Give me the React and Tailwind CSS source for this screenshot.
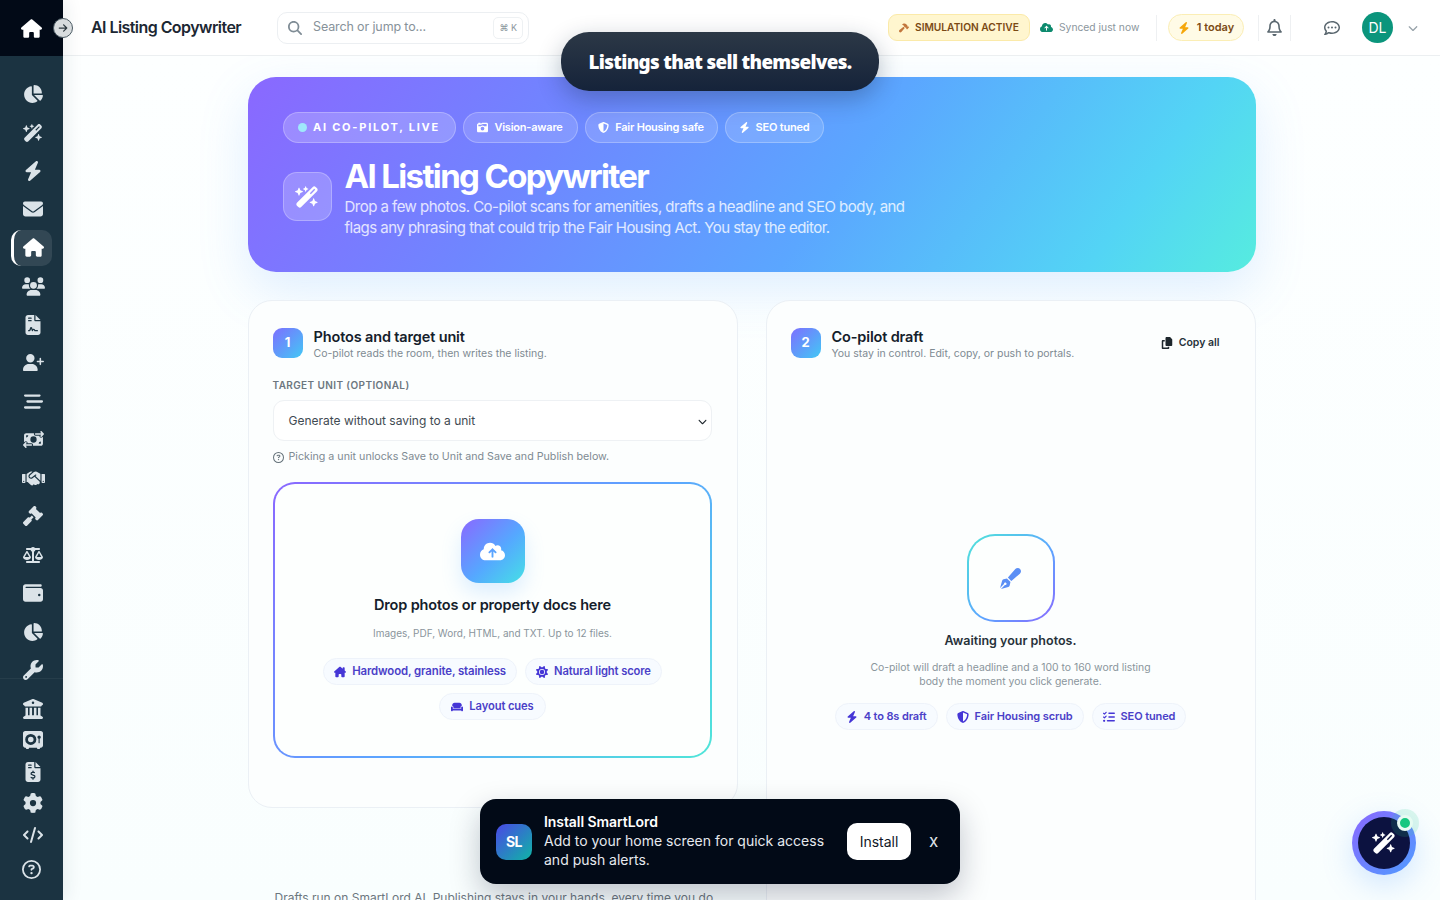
import React from 'react';
import {
  FaChartPie, FaWandMagicSparkles, FaBolt, FaEnvelope, FaHouse, FaUsers, FaFileContract, FaUserPlus,
  FaBarsStaggered, FaMoneyBillTransfer, FaHandshake, FaGavel, FaScaleBalanced, FaWallet, FaWrench,
  FaBuildingColumns, FaVault, FaFileInvoiceDollar, FaGear, FaCode, FaRegCircleQuestion, FaArrowRight,
  FaMagnifyingGlass, FaHammer, FaCloudArrowUp, FaRegBell, FaRegCommentDots, FaChevronDown, FaCameraRetro,
  FaShieldHalved, FaHouseChimney, FaSun, FaCouch, FaPenFancy, FaListCheck, FaCopy,
} from 'react-icons/fa6';

// icon + pixel size, the wide ones run a bit bigger in the reference
const mainNav = [
  [FaChartPie, 20], [FaWandMagicSparkles, 20], [FaBolt, 20], [FaEnvelope, 20], [FaHouse, 20], [FaUsers, 23],
  [FaFileContract, 20], [FaUserPlus, 21], [FaBarsStaggered, 19], [FaMoneyBillTransfer, 21], [FaHandshake, 23],
  [FaGavel, 20], [FaScaleBalanced, 20], [FaWallet, 20], [FaChartPie, 20], [FaWrench, 20],
];
const lowerNav = [FaBuildingColumns, FaVault, FaFileInvoiceDollar, FaGear, FaCode];

const Sidebar = () => (
  <aside className="w-[63px] shrink-0 h-full bg-[#1b3341] flex flex-col relative z-10 shadow-[4px_0_16px_rgba(30,50,60,0.08)]">
    <div className="h-[56px] bg-[#020a17] flex items-center pl-[21px] shrink-0">
      <FaHouse className="text-white text-[21px]" />
    </div>
    <nav className="flex flex-col pt-[19px]">
      {mainNav.map(([Icon, size], i) => {
        const active = i === 4;
        return (
          <div key={i} className="h-[38.4px] flex items-center justify-center pl-[3px]">
            {active ? (
              <div className="w-[41px] h-[36px] -ml-[3px] rounded-[10px] bg-white/10 border-l-[3px] border-white flex items-center justify-center">
                <Icon className="text-white" size={size + 1} />
              </div>
            ) : (
              <Icon className="text-[#dbe3e8]" size={size} />
            )}
          </div>
        );
      })}
    </nav>
    <div className="flex flex-col -mt-[11px] pt-[14px] border-t border-white/5">
      {lowerNav.map((Icon, i) => (
        <div key={i} className="h-[31.4px] flex items-center justify-center pl-[3px]">
          <Icon className="text-[#dbe3e8] text-[20px]" />
        </div>
      ))}
      <div className="h-[31.4px] mt-[4px] flex items-center justify-center">
        <FaRegCircleQuestion className="text-[#dbe3e8] text-[19px]" />
      </div>
    </div>
  </aside>
);

const Topbar = () => (
  <header className="h-[56px] shrink-0 bg-white border-b border-[#eceff1] flex items-center pl-[28px] pr-[22px] relative">
    <span className="absolute -left-[10px] top-[18px] w-[20px] h-[20px] rounded-full bg-[#d8dcde] border border-[#4b5a63] flex items-center justify-center z-20">
      <FaArrowRight className="text-[#2f3a41] text-[10px]" />
    </span>
    <div className="w-[186px] -mt-[1px] text-[16px] font-semibold text-[#1c2733] tracking-[-0.035em] whitespace-nowrap">AI Listing Copywriter</div>
    <div className="w-[252px] h-[32px] rounded-[10px] border border-[#eceff2] flex items-center pl-[10px] pr-[5px]">
      <FaMagnifyingGlass className="text-[#7f8c95] text-[14px]" />
      <span className="ml-[11px] text-[12.5px] text-[#87929a] tracking-[-0.01em]">Search or jump to...</span>
      <span className="ml-auto h-[22px] px-[5px] rounded-[5px] border border-[#eef1f3] flex items-center text-[9px] text-[#8b969d]">⌘ K</span>
    </div>
    <div className="ml-auto flex items-center">
      <div className="h-[27px] w-[142px] rounded-[9px] bg-[#fff6cf] border border-[#fbeaa9] flex items-center justify-center gap-[6px] text-[10.2px] font-semibold text-[#7b4a14]">
        <FaHammer className="text-[#c2763c] text-[10px]" />
        SIMULATION ACTIVE
      </div>
      <div className="ml-[10px] w-[116px] flex items-center gap-[6px] text-[10.3px] text-[#8b969d] whitespace-nowrap">
        <FaCloudArrowUp className="text-[#0d8a6e] text-[13px]" />
        Synced just now
      </div>
      <span className="w-px h-[26px] bg-[#eef0f2]"></span>
      <div className="ml-[11px] h-[27px] w-[76px] rounded-full bg-[#fffbe6] border border-[#fbeeb5] flex items-center justify-center gap-[7px] text-[11px] font-semibold text-[#7b4a14]">
        <FaBolt className="text-[#f5a70c] text-[12px]" />
        1 today
      </div>
      <span className="ml-[14px] w-px h-[26px] bg-[#eef0f2]"></span>
      <div className="w-[31px] flex justify-center"><FaRegBell className="text-[#5a676f] text-[17px]" /></div>
      <span className="w-px h-[26px] bg-[#eef0f2]"></span>
      <div className="ml-[32px] w-[17px] flex justify-center"><FaRegCommentDots className="text-[#5a676f] text-[16px]" /></div>
      <div className="ml-[22px] w-[31px] h-[31px] rounded-full bg-[#0b957c] flex items-center justify-center text-[14px] text-white">DL</div>
      <FaChevronDown className="ml-[15px] text-[#98a3aa] text-[10px]" />
    </div>
  </header>
);

const HeroChip = ({ icon: Icon, children, width }) => (
  <span className={`h-[31px] ${width} rounded-full bg-white/15 border border-white/25 flex items-center justify-center gap-[6px] text-[11px] font-semibold text-white tracking-[-0.02em] whitespace-nowrap`}>
    <Icon className="text-[11px]" />
    {children}
  </span>
);

const Hero = () => (
  <section className="w-[1008px] h-[195px] mx-auto rounded-[28px] px-[35px] pt-[35px] bg-[linear-gradient(125deg,#8a68ff_0%,#6f86ff_30%,#5ba6ff_58%,#53d4f5_85%,#56ecdf_100%)] shadow-[0_18px_50px_rgba(90,160,255,0.18)]">
    <div className="flex gap-[7px]">
      <span className="h-[31px] w-[173px] rounded-full bg-white/20 border border-white/25 flex items-center justify-center gap-[6px] text-[11px] font-bold text-white tracking-[0.16em]">
        <span className="w-[9px] h-[9px] rounded-full bg-[#9fe8fb]"></span>
        AI CO-PILOT, LIVE
      </span>
      <HeroChip icon={FaCameraRetro} width="w-[115px]">Vision-aware</HeroChip>
      <HeroChip icon={FaShieldHalved} width="w-[133px]">Fair Housing safe</HeroChip>
      <HeroChip icon={FaBolt} width="w-[99px]">SEO tuned</HeroChip>
    </div>
    <div className="flex items-center mt-[12.5px] gap-[13px]">
      <div className="w-[49px] h-[49px] rounded-[14px] bg-white/20 border border-white/25 flex items-center justify-center">
        <FaWandMagicSparkles className="text-white text-[24px]" />
      </div>
      <div>
        <h1 className="text-[33px] leading-[40px] font-bold text-white tracking-[-0.05em] whitespace-nowrap">AI Listing Copywriter</h1>
        <p className="text-[15px] leading-[21px] text-white/80 tracking-[-0.035em] w-[570px]">
          Drop a few photos. Co-pilot scans for amenities, drafts a headline and SEO body, and flags any phrasing that could trip the Fair Housing Act. You stay the editor.
        </p>
      </div>
    </div>
  </section>
);

const CardHeader = ({ n, title, sub, children }) => (
  <div className="flex items-start gap-[11px]">
    <div className="w-[30px] h-[30px] rounded-[9px] bg-[linear-gradient(135deg,#7d6fff,#42c8f5)] flex items-center justify-center text-white text-[13px] font-bold">{n}</div>
    <div>
      <div className="text-[14.5px] leading-[18px] font-semibold text-[#14202b] tracking-[-0.01em] whitespace-nowrap">{title}</div>
      <div className="text-[10.5px] leading-[16px] text-[#7e8a92] whitespace-nowrap">{sub}</div>
    </div>
    {children}
  </div>
);

const Chip = ({ icon: Icon, children, className }) => (
  <span className={`h-[27px] rounded-full bg-[#f7fbff] border border-[#eef3fa] flex items-center gap-[6px] font-semibold text-[#4a40c8] tracking-[-0.01em] whitespace-nowrap ${className}`}>
    <Icon className="text-[12px] text-[#4536d6]" />
    {children}
  </span>
);

const LeftCard = () => (
  <div className="h-[508px] rounded-[24px] border border-[#ebf0f5] bg-[#fcfefe] pl-[24px] pr-[25px] pt-[27px]">
    <CardHeader n="1" title="Photos and target unit" sub="Co-pilot reads the room, then writes the listing." />
    <div className="mt-[16px] text-[10px] leading-[14px] font-semibold text-[#6c777f] tracking-[0.04em]">TARGET UNIT (OPTIONAL)</div>
    <div className="mt-[8px] h-[41px] rounded-[11px] border border-[#eef1f4] bg-white flex items-center pt-[1px] pl-[15px] pr-[3px] text-[12px] text-[#3f4a52]">
      Generate without saving to a unit
      <FaChevronDown className="ml-auto text-[#1d252b] text-[9px] mr-[1px]" />
    </div>
    <div className="mt-[9px] flex items-center gap-[5px] text-[10.7px] leading-[14px] text-[#7e8a92]">
      <FaRegCircleQuestion className="text-[#65727a] text-[11px]" />
      Picking a unit unlocks Save to Unit and Save and Publish below.
    </div>
    <div className="mt-[18px] h-[276px] pl-[1px] rounded-[22px] border-2 border-transparent [background:linear-gradient(#fdfffe,#fdfffe)_padding-box,linear-gradient(135deg,#8a68ff,#5ba6ff_55%,#4fe6d8)_border-box] flex flex-col items-center pt-[35px]">
      <div className="w-[64px] h-[64px] rounded-[18px] bg-[linear-gradient(135deg,#8a68ff,#55a8ff_55%,#45e0e6)] shadow-[0_10px_20px_rgba(90,170,255,0.2)] flex items-center justify-center">
        <FaCloudArrowUp className="text-white text-[25px]" />
      </div>
      <div className="mt-[13px] text-[14.5px] leading-[18px] font-semibold text-[#14202b] tracking-[-0.01em]">Drop photos or property docs here</div>
      <div className="mt-[12px] text-[10px] leading-[14px] text-[#8a959c]">Images, PDF, Word, HTML, and TXT. Up to 12 files.</div>
      <div className="mt-[18px] flex flex-wrap justify-center gap-x-[8px] gap-y-[8px] w-[400px]">
        <Chip icon={FaHouseChimney} className="px-[10px] text-[11.4px]">Hardwood, granite, stainless</Chip>
        <Chip icon={FaSun} className="px-[10px] text-[11.2px]">Natural light score</Chip>
        <Chip icon={FaCouch} className="px-[11px] text-[11.2px]">Layout cues</Chip>
      </div>
    </div>
  </div>
);

const RightCard = () => (
  <div className="h-[700px] rounded-[24px] border border-[#ebf0f5] bg-[#fcfefe] px-[24px] pt-[27px]">
    <CardHeader n="2" title="Co-pilot draft" sub="You stay in control. Edit, copy, or push to portals.">
      <div className="ml-auto mr-[11px] mt-[7px] flex items-center gap-[6px] text-[10.5px] font-semibold text-[#27323a]">
        <FaCopy className="text-[12px] text-[#1d262c]" />
        Copy all
      </div>
    </CardHeader>
    <div className="flex flex-col items-center mt-[172px]">
      <div className="w-[88px] h-[88px] rounded-[28px] border-2 border-transparent [background:linear-gradient(#fdfffe,#fdfffe)_padding-box,linear-gradient(135deg,#4fe6d8,#5ba6ff_55%,#8a68ff)_border-box] flex items-center justify-center">
        <FaPenFancy className="text-[#5b8ff5] text-[21px]" />
      </div>
      <div className="mt-[10px] text-[12.5px] leading-[18px] font-semibold text-[#27323a]">Awaiting your photos.</div>
      <div className="mt-[11px] w-[300px] text-center text-[10.4px] leading-[14px] text-[#8a959c]">
        Co-pilot will draft a headline and a 100 to 160 word listing body the moment you click generate.
      </div>
      <div className="mt-[14px] flex gap-[8px]">
        <Chip icon={FaBolt} className="px-[10px] text-[11px]">4 to 8s draft</Chip>
        <Chip icon={FaShieldHalved} className="px-[10px] text-[11px]">Fair Housing scrub</Chip>
        <Chip icon={FaListCheck} className="px-[10px] text-[11px]">SEO tuned</Chip>
      </div>
    </div>
  </div>
);

const InstallToast = () => (
  <div className="absolute left-[480px] top-[799px] w-[480px] h-[85px] rounded-[16px] bg-[#020a17] flex items-center pl-[16px] z-30 shadow-[0_12px_30px_rgba(15,25,50,0.25)] font-['Inter',sans-serif]">
    <div className="w-[36px] h-[36px] rounded-[10px] bg-[linear-gradient(135deg,#4a47e6,#0fb5a5)] flex items-center justify-center text-white text-[14px] font-bold tracking-[-0.03em]">SL</div>
    <div className="ml-[12px] w-[290px] pb-[2px] text-[14px] leading-[19px] text-[#e6e9ee]">
      <div className="font-semibold text-white tracking-[-0.005em]">Install SmartLord</div>
      Add to your home screen for quick access and push alerts.
    </div>
    <button className="ml-[13px] w-[64px] h-[37px] rounded-[10px] bg-white text-[#111827] text-[14px]">Install</button>
    <span className="ml-[18px] text-[#dfe3e8] text-[17px]">x</span>
  </div>
);

const App = () => (
  <div className="h-screen w-full flex overflow-hidden bg-[#fbfefe] relative font-['Inter',sans-serif]">
    <Sidebar />
    <div className="flex-1 min-w-0 flex flex-col h-full">
      <Topbar />
      <main className="flex-1 overflow-hidden pt-[21px] bg-[linear-gradient(180deg,#fdffff,#f9fefe)]">
        <Hero />
        <div className="w-[1008px] mx-auto mt-[28px] grid grid-cols-2 gap-[28px]">
          <div>
            <LeftCard />
            <div className="mt-[81px] pl-[27px] text-[12px] text-[#6c777f] whitespace-nowrap">Drafts run on SmartLord AI. Publishing stays in your hands, every time you do.</div>
          </div>
          <RightCard />
        </div>
      </main>
    </div>

    <div className="absolute left-[561px] top-[32px] w-[318px] h-[59px] pt-[1px] rounded-[28px] bg-[linear-gradient(180deg,#2c3846,#15233a)] flex items-center justify-center z-30 shadow-[0_8px_24px_rgba(20,35,60,0.3)] text-white text-[18.8px] font-black tracking-[-0.035em] font-['Noto_Sans',sans-serif]">
      Listings that sell themselves.
    </div>

    <InstallToast />

    <div className="absolute left-[1352px] top-[811px] w-[64px] h-[64px] rounded-full bg-[linear-gradient(135deg,#8a68ff,#4f9bff)] flex items-center justify-center z-30 shadow-[0_10px_30px_rgba(90,160,255,0.25)]">
      <div className="w-[52px] h-[52px] rounded-full bg-[#0c1240] flex items-center justify-center">
        <FaWandMagicSparkles className="text-white text-[24px]" />
      </div>
      <span className="absolute right-[3px] top-[4px] w-[16px] h-[16px] rounded-full bg-[#14c77f] border-[3px] border-[#e6fbf2] shadow-[0_0_0_6px_rgba(40,210,140,0.15)]"></span>
    </div>
  </div>
);

export default App;
